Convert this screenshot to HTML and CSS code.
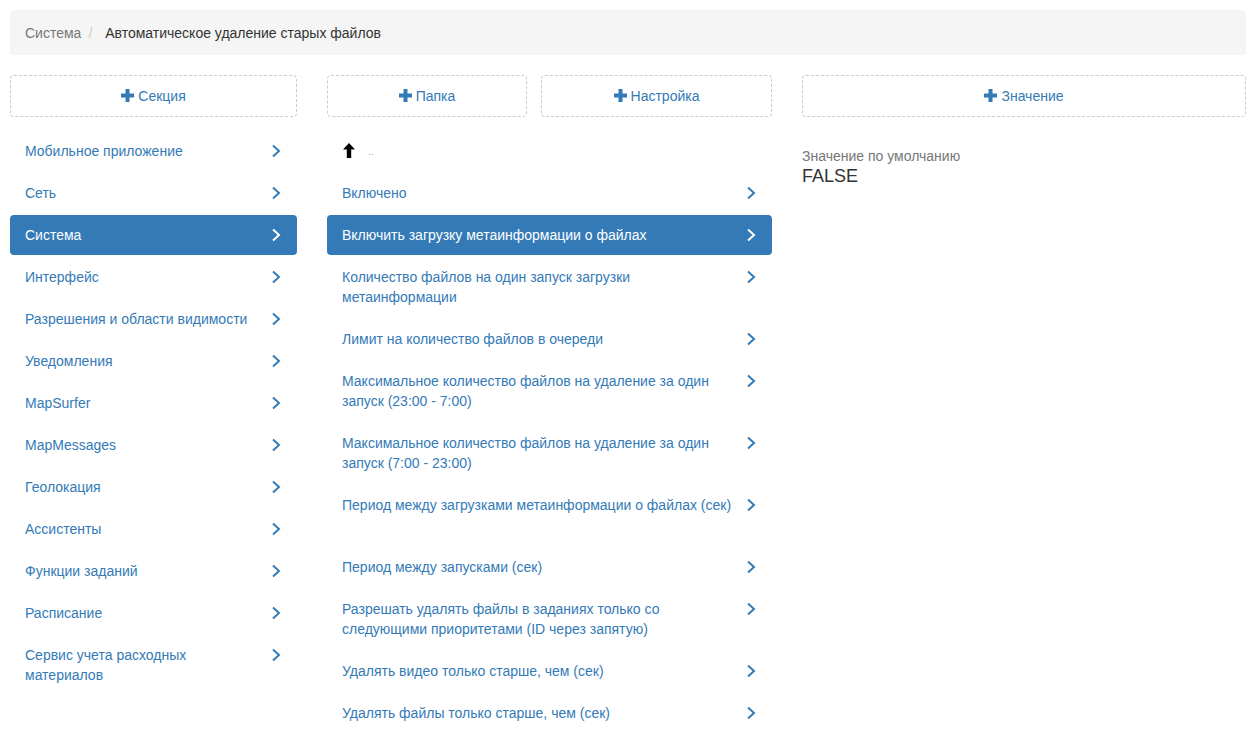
FILE: index.html
```html
<!DOCTYPE html>
<html lang="ru">
<head>
    <meta charset="UTF-8">
    <meta name="viewport" content="width=device-width, initial-scale=1.0">
    <title>Настройки</title>
    <link rel="stylesheet" href="styles.css">
</head>

<body>

    <ol class="breadcrumb">
        <li><a href="#">Система</a></li>
        <li class="active">Автоматическое удаление старых файлов</li>
    </ol>

    <div class="columns">

        <!-- sections -->
        <div class="col">
            <div class="actions">
                <button class="add-btn"><svg class="plus" width="13" height="13" viewBox="0 0 13 13"><path d="M4.5 0h4v4.5H13v4H8.5V13h-4V8.5H0v-4h4.5z"/></svg>Секция</button>
            </div>

            <ul class="nav-list">
                <li><a href="#"><span class="label">Мобильное приложение</span><svg class="chevron" width="12" height="14" viewBox="0 0 12 14"><polyline points="3,1.5 9,7 3,12.5"/></svg></a></li>
                <li><a href="#"><span class="label">Сеть</span><svg class="chevron" width="12" height="14" viewBox="0 0 12 14"><polyline points="3,1.5 9,7 3,12.5"/></svg></a></li>
                <li class="active"><a href="#"><span class="label">Система</span><svg class="chevron" width="12" height="14" viewBox="0 0 12 14"><polyline points="3,1.5 9,7 3,12.5"/></svg></a></li>
                <li><a href="#"><span class="label">Интерфейс</span><svg class="chevron" width="12" height="14" viewBox="0 0 12 14"><polyline points="3,1.5 9,7 3,12.5"/></svg></a></li>
                <li><a href="#"><span class="label">Разрешения и области видимости</span><svg class="chevron" width="12" height="14" viewBox="0 0 12 14"><polyline points="3,1.5 9,7 3,12.5"/></svg></a></li>
                <li><a href="#"><span class="label">Уведомления</span><svg class="chevron" width="12" height="14" viewBox="0 0 12 14"><polyline points="3,1.5 9,7 3,12.5"/></svg></a></li>
                <li><a href="#"><span class="label">MapSurfer</span><svg class="chevron" width="12" height="14" viewBox="0 0 12 14"><polyline points="3,1.5 9,7 3,12.5"/></svg></a></li>
                <li><a href="#"><span class="label">MapMessages</span><svg class="chevron" width="12" height="14" viewBox="0 0 12 14"><polyline points="3,1.5 9,7 3,12.5"/></svg></a></li>
                <li><a href="#"><span class="label">Геолокация</span><svg class="chevron" width="12" height="14" viewBox="0 0 12 14"><polyline points="3,1.5 9,7 3,12.5"/></svg></a></li>
                <li><a href="#"><span class="label">Ассистенты</span><svg class="chevron" width="12" height="14" viewBox="0 0 12 14"><polyline points="3,1.5 9,7 3,12.5"/></svg></a></li>
                <li><a href="#"><span class="label">Функции заданий</span><svg class="chevron" width="12" height="14" viewBox="0 0 12 14"><polyline points="3,1.5 9,7 3,12.5"/></svg></a></li>
                <li><a href="#"><span class="label">Расписание</span><svg class="chevron" width="12" height="14" viewBox="0 0 12 14"><polyline points="3,1.5 9,7 3,12.5"/></svg></a></li>
                <li><a href="#"><span class="label">Сервис учета расходных материалов</span><svg class="chevron" width="12" height="14" viewBox="0 0 12 14"><polyline points="3,1.5 9,7 3,12.5"/></svg></a></li>
            </ul>
        </div>

        <!-- settings -->
        <div class="col">
            <div class="actions actions-split">
                <button class="add-btn"><svg class="plus" width="13" height="13" viewBox="0 0 13 13"><path d="M4.5 0h4v4.5H13v4H8.5V13h-4V8.5H0v-4h4.5z"/></svg>Папка</button>
                <button class="add-btn"><svg class="plus" width="13" height="13" viewBox="0 0 13 13"><path d="M4.5 0h4v4.5H13v4H8.5V13h-4V8.5H0v-4h4.5z"/></svg>Настройка</button>
            </div>

            <ul class="nav-list">
                <li class="up"><a href="#"><svg class="arrow-up" width="12" height="15" viewBox="0 0 12 15"><path d="M6 0L12 6.5H8.2V15H3.8V6.5H0z"/></svg><span class="dots">..</span></a></li>
                <li><a href="#"><span class="label">Включено</span><svg class="chevron" width="12" height="14" viewBox="0 0 12 14"><polyline points="3,1.5 9,7 3,12.5"/></svg></a></li>
                <li class="active"><a href="#"><span class="label">Включить загрузку метаинформации о файлах</span><svg class="chevron" width="12" height="14" viewBox="0 0 12 14"><polyline points="3,1.5 9,7 3,12.5"/></svg></a></li>
                <li><a href="#"><span class="label">Количество файлов на один запуск загрузки метаинформации</span><svg class="chevron" width="12" height="14" viewBox="0 0 12 14"><polyline points="3,1.5 9,7 3,12.5"/></svg></a></li>
                <li><a href="#"><span class="label">Лимит на количество файлов в очереди</span><svg class="chevron" width="12" height="14" viewBox="0 0 12 14"><polyline points="3,1.5 9,7 3,12.5"/></svg></a></li>
                <li><a href="#"><span class="label">Максимальное количество файлов на удаление за один запуск (23:00 - 7:00)</span><svg class="chevron" width="12" height="14" viewBox="0 0 12 14"><polyline points="3,1.5 9,7 3,12.5"/></svg></a></li>
                <li><a href="#"><span class="label">Максимальное количество файлов на удаление за один запуск (7:00 - 23:00)</span><svg class="chevron" width="12" height="14" viewBox="0 0 12 14"><polyline points="3,1.5 9,7 3,12.5"/></svg></a></li>
                <li><a href="#"><span class="label label-tall">Период между загрузками метаинформации о файлах (сек)</span><svg class="chevron" width="12" height="14" viewBox="0 0 12 14"><polyline points="3,1.5 9,7 3,12.5"/></svg></a></li>
                <li><a href="#"><span class="label">Период между запусками (сек)</span><svg class="chevron" width="12" height="14" viewBox="0 0 12 14"><polyline points="3,1.5 9,7 3,12.5"/></svg></a></li>
                <li><a href="#"><span class="label">Разрешать удалять файлы в заданиях только со следующими приоритетами (ID через запятую)</span><svg class="chevron" width="12" height="14" viewBox="0 0 12 14"><polyline points="3,1.5 9,7 3,12.5"/></svg></a></li>
                <li><a href="#"><span class="label">Удалять видео только старше, чем (сек)</span><svg class="chevron" width="12" height="14" viewBox="0 0 12 14"><polyline points="3,1.5 9,7 3,12.5"/></svg></a></li>
                <li><a href="#"><span class="label">Удалять файлы только старше, чем (сек)</span><svg class="chevron" width="12" height="14" viewBox="0 0 12 14"><polyline points="3,1.5 9,7 3,12.5"/></svg></a></li>
            </ul>
        </div>

        <!-- value -->
        <div class="col">
            <div class="actions">
                <button class="add-btn"><svg class="plus" width="13" height="13" viewBox="0 0 13 13"><path d="M4.5 0h4v4.5H13v4H8.5V13h-4V8.5H0v-4h4.5z"/></svg>Значение</button>
            </div>

            <div class="value">
                <div class="value-title">Значение по умолчанию</div>
                <div class="value-text">FALSE</div>
            </div>
        </div>

    </div>

</body>
</html>
```

FILE: styles.css
```css
*, html {
    box-sizing: border-box;
    margin: 0;
    padding: 0;
}

body {
    padding: 10px;
    font-family: "Liberation Sans", Arial, sans-serif;
    font-size: 14px;
    line-height: 20px;
    color: #333;
    background: #fff;
}

a {
    color: #337ab7;
    text-decoration: none;
}

/* breadcrumb */

.breadcrumb {
    list-style: none;
    background: #f5f5f5;
    border-radius: 4px;
    padding: 13px 15px 12px;
    margin-bottom: 20px;
    display: flex;
}

.breadcrumb a {
    color: #777;
}

.breadcrumb li + li:before {
    content: "/\00a0";
    padding: 0 9px 0 7px;
    color: #ccc;
}

.breadcrumb .active {
    color: #333;
}

/* layout */

.columns {
    display: grid;
    grid-template-columns: 287px 445px 1fr;
    column-gap: 30px;
}

.actions {
    display: grid;
    margin-bottom: 14px;
}

.actions-split {
    grid-template-columns: 200px 1fr;
    column-gap: 14px;
}

.add-btn {
    font-family: inherit;
    font-size: 14px;
    line-height: 20px;
    color: #337ab7;
    background: #fff;
    border: 1px dashed #ccc;
    border-radius: 4px;
    padding: 10px 12px;
    text-align: center;
    cursor: pointer;
}

.plus {
    fill: #337ab7;
    vertical-align: -1px;
    margin-right: 4px;
}

/* stacked pills */

.nav-list {
    list-style: none;
}

.nav-list li + li {
    margin-top: 2px;
}

.nav-list a {
    display: flex;
    align-items: flex-start;
    padding: 10px 15px;
    border-radius: 4px;
}

.nav-list .label {
    flex: 1;
    margin-right: 3px;
}

.nav-list .label-tall {
    min-height: 40px;
}

.chevron {
    flex: none;
    margin-top: 3px;
    fill: none;
    stroke: #337ab7;
    stroke-width: 2;
}

.nav-list .active a {
    background: #337ab7;
    color: #fff;
}

.nav-list .active .chevron {
    stroke: #fff;
}

.arrow-up {
    flex: none;
    fill: #000;
    margin: 2px 0 0 1px;
}

.dots {
    color: #aaa;
    font-size: 11px;
    line-height: 20px;
    margin-left: 13px;
}

/* value panel */

.value {
    margin-top: 29px;
}

.value-title {
    color: #777;
}

.value-text {
    font-size: 18px;
    line-height: 20px;
    color: #333;
}
```
